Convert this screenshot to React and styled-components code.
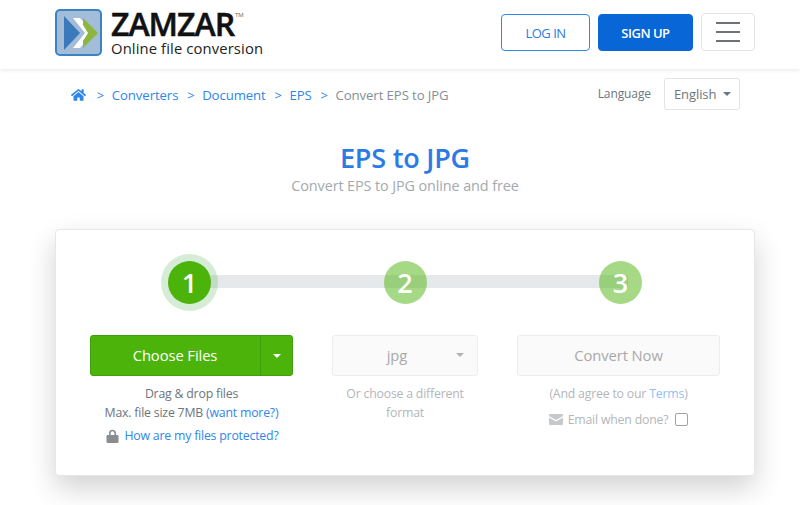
import React from "react";
import styled, { createGlobalStyle } from "styled-components";

const Global = createGlobalStyle`
  html, body { margin: 0; padding: 0; background: #fff; }
  body { font-family: "Open Sans", "Noto Sans", "Liberation Sans", sans-serif; overflow: hidden; }
  * { box-sizing: border-box; }
`;
const Page = styled.div`width: 800px; height: 505px; overflow: hidden; background: #fff;`;
const Header = styled.header`
  height: 69px; display: flex; align-items: flex-start; padding: 9px 45px 0 55px;
  box-shadow: 0 1px 4px rgba(0,0,0,.1); position: relative;
`;
const LogoLink = styled.div`display: flex; gap: 9px; width: 446px;`;
const LogoText = styled.div`display: flex; flex-direction: column; position: relative;`;
const Wordmark = styled.div`
  font-family: "Open Sans", sans-serif; font-weight: 600; font-size: 32px; line-height: 30px; color: #111;
  letter-spacing: -1px; -webkit-text-stroke: .5px #111;
`;
const Tm = styled.span`position: absolute; left: 124px; top: 2px; font-size: 6px; line-height: 8px; color: #666;`;
const Tagline = styled.div`font-size: 14.8px; line-height: 18px; color: #222; letter-spacing: .12px;`;
const Actions = styled.div`display: flex; align-items: flex-start; margin-top: 5px;`;
const HeaderButton = styled.button`
  width: ${p => p.$w}px; height: 37px; border-radius: 4px; font: 400 13px "Open Sans", sans-serif;
  letter-spacing: -.5px; margin-right: 8px; padding: 0;
  color: ${p => (p.$solid ? "#fff" : "#2c7be5")};
  background: ${p => (p.$solid ? "#0866d6" : "#fff")};
  border: 1px solid ${p => (p.$solid ? "#0866d6" : "#2f86ea")};
  font-weight: ${p => (p.$solid ? 600 : 400)};
`;
const Burger = styled.button`
  width: 54px; height: 38px; margin-top: -1px; background: #fff; border: 1px solid #e2e3e5; border-radius: 4px;
  display: flex; flex-direction: column; justify-content: center; align-items: center; gap: 7px; padding: 0;
`;
const BurgerLine = styled.span`display: block; width: 24px; height: 2px; background: #6f7275;`;
const CrumbRow = styled.div`
  height: 41px; margin-top: 4px; padding: 0 60px 0 71px; display: flex; align-items: center;
  font-size: 13.2px;
`;
const Crumbs = styled.nav`display: flex; align-items: center; flex: 1; color: #6d757d; margin-top: 2px;`;
const HomeWrap = styled.span`display: flex; margin-right: 2px;`;
const Crumb = styled.span`color: ${p => (p.$current ? "#868e96" : "#2f86ea")}; letter-spacing: -.1px;`;
const Sep = styled.span`color: #2f86ea; margin: 0 7.6px 0 8.8px; font-size: 13px;`;
const LangLabel = styled.span`color: #6d757d; font-size: 12px; letter-spacing: -.1px; margin-right: 13px;`;
const LangSelect = styled.div`
  width: 76px; height: 32px; border: 1px solid #e2e3e5; border-radius: 3px; display: flex; align-items: center;
  padding-left: 9px; gap: 7px; color: #6d757d; font-size: 13px; letter-spacing: -.1px;
`;
const Caret = styled.span`
  width: 0; height: 0; display: inline-block; flex: none;
  border-left: ${p => p.$s}px solid transparent; border-right: ${p => p.$s}px solid transparent;
  border-top: ${p => p.$s}px solid ${p => p.$c};
`;
const Hero = styled.div`text-align: center; margin-top: 27px; height: 61px; padding-left: 10px;`;
const Title = styled.h1`margin: 0; font-size: 27px; line-height: 34px; font-weight: 600; color: #2c7be5; letter-spacing: -.2px;`;
const Subtitle = styled.p`margin: 1px 0 0; font-size: 14.4px; line-height: 20px; color: #a4a9ae; letter-spacing: -.1px;`;
const Card = styled.section`
  width: 700px; height: 247px; margin: 27px 0 0 55px; background: #fff; border-radius: 4px;
  border: 1px solid #e6e7e8; box-shadow: 0 12px 28px rgba(0,0,0,.18); padding-top: 24px; position: relative;
`;
const StepRow = styled.div`
  position: relative; height: 56px; margin: 0 112px 0 105px; display: flex; justify-content: space-between; align-items: center;
`;
const Track = styled.div`position: absolute; left: 28px; right: 14px; top: 21px; height: 13px; background: #e6e9eb;`;
const StepDot = styled.div`
  position: relative; border-radius: 50%; display: flex; align-items: center; justify-content: center;
  color: #fff; font-weight: 600; font-size: 27px;
  width: 43px; height: 43px;
  background: ${p => (p.$active ? "#4cb30b" : "rgba(76,179,11,.5)")};
  ${p => p.$active && "box-shadow: 0 0 0 7px rgba(70,170,70,.22); margin-left: 7px;"}
`;
const Columns = styled.div`
  display: grid; grid-template-columns: 203px 146px 203px; column-gap: 39px; padding-left: 34px; margin-top: 25px;
`;
const Col = styled.div`display: flex; flex-direction: column; align-items: center; text-align: center;`;
const ChooseGroup = styled.div`
  width: 203px; height: 41px; display: flex; background: #4cb30b; border: 1px solid #3f9f0a; border-radius: 3px; color: #fff;
`;
const ChooseMain = styled.div`
  flex: 1; display: flex; align-items: center; justify-content: center; font-size: 14.8px; letter-spacing: -.1px;
  padding-right: 1px; padding-bottom: 1px;
`;
const ChooseSplit = styled.div`
  width: 32px; border-left: 1px solid #3f9f0a; display: flex; align-items: center; justify-content: center;
`;
const Disabled = styled.div`
  height: 41px; width: 100%; background: #fafafa; border: 1px solid #ecedee; border-radius: 3px; color: #a9a9a9;
  display: flex; align-items: center; justify-content: center; font-size: 14.8px; letter-spacing: -.1px; position: relative;
  padding-right: ${p => p.$pr || 0}px; padding-bottom: 2px;
`;
const FormatCaret = styled.span`position: absolute; right: 13px; top: 17px; display: flex;`;
const Note = styled.div`
  margin-top: 9px; font-size: 12.3px; line-height: 18.5px; letter-spacing: -.2px; color: ${p => (p.$muted ? "#b3b6b9" : "#6d757d")};
`;
const A = styled.span`color: ${p => (p.$muted ? "#8fc0f5" : "#2f86ea")};`;
const IconRow = styled.div`
  display: flex; align-items: center; justify-content: center; gap: ${p => p.$gap}px; margin-top: ${p => p.$mt}px;
  font-size: 12.3px; letter-spacing: -.2px; line-height: 18px; color: ${p => p.$c}; padding-left: ${p => p.$pl || 0}px;
`;
const Check = styled.span`width: 13px; height: 13px; border: 1px solid #8a8a8a; border-radius: 2px; margin-left: 2px; opacity: .8;`;

const Logo = () => (
  <svg width="47" height="47" viewBox="0 0 47 47">
    <rect x="1" y="1" width="45" height="45" rx="4" fill="#a3bdd8" stroke="#3a84c6" strokeWidth="2" />
    <path d="M9 7 L25 24 L9 41 Z" fill="#3b79ba" />
    <path d="M18 9 L30 24 L18 39 L25 39 L39 24 L25 9 Z" fill="#ffffff" />
    <path d="M28 9 L43 24 L28 39 L28 32 L33 24 L28 16 Z" fill="#8cb640" />
  </svg>
);
const Home = () => (
  <svg width="15" height="14" viewBox="0 0 576 512" fill="#2f86ea">
    <path d="M280 148 96 300v164c0 9 7 16 16 16l112-1c9 0 16-7 16-16v-95c0-9 7-16 16-16h64c9 0 16 7 16 16v95c0 9 7 16 16 16l112 1c9 0 16-7 16-16V300L296 148c-5-4-11-4-16 0zM572 251l-84-69V44c0-7-5-12-12-12h-56c-7 0-12 5-12 12v72l-89-74c-18-14-43-14-61 0L4 251c-5 4-6 12-2 17l26 31c4 5 12 6 17 2L280 107c5-4 11-4 16 0l235 194c5 4 13 3 17-2l26-31c4-5 3-13-2-17z" />
  </svg>
);
const Lock = () => (
  <svg width="13" height="14" viewBox="0 0 13 14" fill="#8a8d90">
    <path d="M3 6V4.2a3.5 3.5 0 0 1 7 0V6h-1.6V4.2a1.9 1.9 0 0 0-3.8 0V6z" />
    <rect x="0.5" y="6" width="12" height="8" rx="1.2" />
  </svg>
);
const Mail = () => (
  <svg width="14" height="11" viewBox="0 0 14 11" fill="#c6c8ca">
    <path d="M1 0h12a1 1 0 0 1 1 1v1L7 6 0 2V1a1 1 0 0 1 1-1z" />
    <path d="M0 3.6 7 7.6l7-4V10a1 1 0 0 1-1 1H1a1 1 0 0 1-1-1z" />
  </svg>
);

export default function App() {
  return (
    <Page>
      <Global />
      <Header>
        <LogoLink>
          <Logo />
          <LogoText>
            <Wordmark>ZAMZAR</Wordmark>
            <Tm>TM</Tm>
            <Tagline>Online file conversion</Tagline>
          </LogoText>
        </LogoLink>
        <Actions>
          <HeaderButton $w={89}>LOG IN</HeaderButton>
          <HeaderButton $w={95} $solid>SIGN UP</HeaderButton>
          <Burger><BurgerLine /><BurgerLine /><BurgerLine /></Burger>
        </Actions>
      </Header>
      <CrumbRow>
        <Crumbs>
          <HomeWrap><Home /></HomeWrap>
          <Sep>&gt;</Sep><Crumb>Converters</Crumb>
          <Sep>&gt;</Sep><Crumb>Document</Crumb>
          <Sep>&gt;</Sep><Crumb>EPS</Crumb>
          <Sep>&gt;</Sep><Crumb $current>Convert EPS to JPG</Crumb>
        </Crumbs>
        <LangLabel>Language</LangLabel>
        <LangSelect>English <Caret $s={4} $c="#6d757d" /></LangSelect>
      </CrumbRow>
      <Hero>
        <Title>EPS to JPG</Title>
        <Subtitle>Convert EPS to JPG online and free</Subtitle>
      </Hero>
      <Card>
        <StepRow>
          <Track />
          <StepDot $active>1</StepDot>
          <StepDot>2</StepDot>
          <StepDot>3</StepDot>
        </StepRow>
        <Columns>
          <Col>
            <ChooseGroup>
              <ChooseMain>Choose Files</ChooseMain>
              <ChooseSplit><Caret $s={4} $c="#fff" /></ChooseSplit>
            </ChooseGroup>
            <Note>Drag &amp; drop files<br />Max. file size 7MB <A>(want more?)</A></Note>
            <IconRow $gap={5} $mt={5} $c="#2f86ea" $pl={2}><Lock /><span>How are my files protected?</span></IconRow>
          </Col>
          <Col>
            <Disabled $pr={16}>jpg<FormatCaret><Caret $s={4} $c="#b3b3b3" /></FormatCaret></Disabled>
            <Note $muted>Or choose a different<br />format</Note>
          </Col>
          <Col>
            <Disabled>Convert Now</Disabled>
            <Note $muted>(And agree to our <A $muted>Terms</A>)</Note>
            <IconRow $gap={5} $mt={7} $c="#b3b6b9"><Mail /><span>Email when done?</span><Check /></IconRow>
          </Col>
        </Columns>
      </Card>
    </Page>
  );
}
